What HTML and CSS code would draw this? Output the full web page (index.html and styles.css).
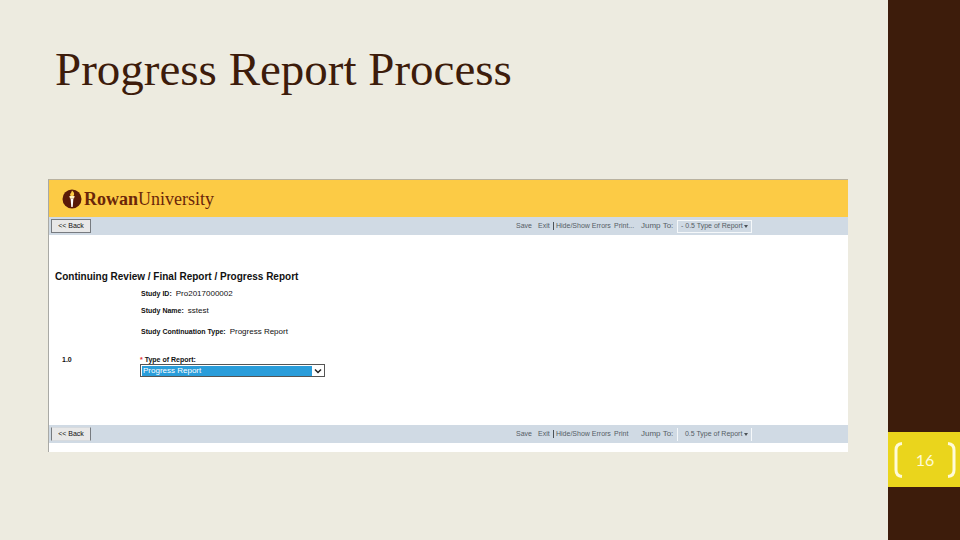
FILE: index.html
```html
<!DOCTYPE html>
<html lang="en">
<head>
<meta charset="utf-8">
<title>Progress Report Process</title>
<link rel="stylesheet" href="styles.css">
</head>
<body>
<div class="slide">
  <main class="content">
    <h1 class="title">Progress Report Process</h1>
    <section class="panel">
      <header class="brand">
        <svg class="seal" viewBox="0 0 20 20" aria-hidden="true">
          <circle cx="10" cy="10" r="9.5" fill="#5a1a08"/>
          <path d="M10 1.5C11.5 3 12.5 4 12 6L11.3 7H8.7C7.6 5.5 8.3 4.500 9 4Z" fill="#fccb45"/>
          <path d="M7.300 7H12.700L12 9.500H8Z" fill="#fff0c0"/>
          <path d="M8.600 9.500H11.400L10.700 18H9.300Z" fill="#fff"/>
        </svg>
        <span class="wordmark"><span class="strong">Rowan</span><span>University</span></span>
      </header>
      <nav class="toolbar">
        <button class="back" type="button">&lt;&lt; Back</button>
        <div class="actions">
          <a class="save" href="#">Save</a>
          <a class="exit" href="#">Exit</a>
          <a class="errors" href="#">Hide/Show Errors</a>
          <a class="print" href="#">Print...</a>
          <label class="jump" for="jump-top">Jump To:</label>
          <span class="jump-box"><select id="jump-top"><option>- 0.5 Type of Report</option></select><svg class="caret" viewBox="0 0 4 3" aria-hidden="true"><path d="M0 0H4L2 3Z"/></svg></span>
        </div>
      </nav>
      <div class="form">
        <h2 class="heading">Continuing Review / Final Report / Progress Report</h2>
        <dl class="facts">
          <div><dt>Study ID:</dt><dd>Pro2017000002</dd></div>
          <div><dt>Study Name:</dt><dd>sstest</dd></div>
          <div class="apart"><dt>Study Continuation Type:</dt><dd>Progress Report</dd></div>
        </dl>
        <div class="question">
          <span class="number">1.0</span>
          <div class="field">
            <label for="report"><span class="required">*</span> Type of Report:</label>
            <span class="report-box"><select id="report"><option>Progress Report</option></select><svg class="chevron" viewBox="0 0 8 6" aria-hidden="true"><path d="M1 1.500L4 4.500L7 1.500"/></svg></span>
          </div>
        </div>
      </div>
      <nav class="toolbar lower">
        <button class="back" type="button">&lt;&lt; Back</button>
        <div class="actions">
          <a class="save" href="#">Save</a>
          <a class="exit" href="#">Exit</a>
          <a class="errors" href="#">Hide/Show Errors</a>
          <a class="print" href="#">Print</a>
          <label class="jump" for="jump-bottom">Jump To:</label>
          <span class="jump-box"><select id="jump-bottom"><option>&nbsp; 0.5 Type of Report</option></select><svg class="caret" viewBox="0 0 4 3" aria-hidden="true"><path d="M0 0H4L2 3Z"/></svg></span>
        </div>
      </nav>
    </section>
  </main>
  <aside class="rail">
    <div class="page">
      <svg class="bracket" viewBox="0 0 9 36" aria-hidden="true"><path d="M8 1.500Q2 2 2 8V28Q2 34 8 34.500"/></svg>
      <span>16</span>
      <svg class="bracket" viewBox="0 0 9 36" aria-hidden="true"><path d="M1 1.500Q7 2 7 8V28Q7 34 1 34.500"/></svg>
    </div>
  </aside>
</div>
</body>
</html>
```
FILE: styles.css
```css
* {
  box-sizing: border-box;
}

body {
  margin: 0;
  background: #edebe0;
  font-family: "Liberation Sans", Arial, sans-serif;
}

.slide {
  display: grid;
  grid-template-columns: 1fr 72px;
  min-height: 100vh;
}

.content {
  padding: 39px 40px 0 48px;
}

.title {
  margin: 0 0 80px;
  padding-left: 7px;
  color: #3d1c0b;
  font: 400 47px/60px "Liberation Serif", "Times New Roman", serif;
}

.panel {
  padding-bottom: 9px;
  border-top: 1px solid #b9b2a0;
  border-left: 1px solid #a9a9a5;
  background: #fff;
}

.brand {
  display: flex;
  align-items: center;
  height: 37px;
  padding-left: 13px;
  background: #fccb45;
}

.seal {
  width: 20px;
  height: 20px;
}

.wordmark {
  display: flex;
  padding-left: 2px;
  color: #6a2509;
  font: 400 18px/24px "Liberation Serif", "Times New Roman", serif;
}

.strong {
  font-weight: 700;
}

.toolbar {
  display: flex;
  align-items: center;
  justify-content: space-between;
  height: 18px;
  padding: 0 96px 0 2px;
  background: #d0dae4;
}

.back {
  width: 40px;
  height: 14px;
  padding: 0;
  border: 1px solid #777b80;
  background: #e8e8e8;
  color: #111;
  font: 400 7px/10px "Liberation Sans", Arial, sans-serif;
}

.actions {
  display: grid;
  grid-template-columns: 22px 15px 61px 27px 36px 75px;
  align-items: center;
  color: #555d65;
  font-size: 7px;
  line-height: 8px;
  white-space: nowrap;
}

.actions a {
  color: inherit;
  text-decoration: none;
}

.errors {
  padding-left: 2px;
  border-left: 1px solid #4c5258;
}

.jump {
  font-size: 8px;
}

.jump-box,
.report-box {
  display: flex;
  align-items: center;
}

.jump-box {
  height: 13px;
  padding: 0 3px;
  border: 1px solid #f5f8fa;
}

.lower .jump-box {
  border-width: 0 1px;
}

.lower .back {
  border-top-color: #d6dade;
  border-bottom-color: #d6dade;
}

select {
  flex: 1;
  min-width: 0;
  padding: 0;
  border: 0;
  appearance: none;
  background: transparent;
  color: inherit;
  font: 400 7px/10px "Liberation Sans", Arial, sans-serif;
}

.caret {
  width: 4px;
  height: 3px;
  fill: #4c5258;
}

.form {
  padding: 36px 6px 48px;
  color: #111;
}

.heading {
  margin: 0 0 6px;
  font-size: 10px;
  line-height: 12px;
}

.facts {
  margin: 0 0 18px 86px;
  font-size: 7px;
  line-height: 10px;
}

.facts div {
  display: flex;
  gap: 4px;
  margin-bottom: 7px;
}

.facts .apart {
  padding-top: 4px;
}

dt {
  font-weight: 700;
}

dd {
  margin: 0;
  font-size: 8px;
}

.question {
  display: grid;
  grid-template-columns: 78px 185px;
  padding-left: 7px;
  font-size: 7px;
  font-weight: 700;
  line-height: 9px;
}

.field {
  display: grid;
}

.required {
  color: #d33;
}

.report-box {
  height: 13px;
  border: 1px solid #555;
  padding: 1px;
}

.report-box select {
  height: 10px;
  padding-left: 1px;
  background: #2a9dda;
  color: #fff;
  font-size: 8px;
}

.chevron {
  width: 8px;
  height: 6px;
  margin: 0 1px 0 2px;
  fill: none;
  stroke: #222;
  stroke-width: 1.5;
}

.rail {
  padding-top: 432px;
  background: #3d1c0b;
}

.page {
  display: flex;
  align-items: center;
  justify-content: space-between;
  height: 55px;
  padding: 0 4px 0 6px;
  background: #ead51c;
  color: #fffbd8;
  font: 400 16px/20px Lato, sans-serif;
}

.bracket {
  width: 9px;
  height: 36px;
  fill: none;
  stroke: #fffbd8;
  stroke-width: 3;
}
```
